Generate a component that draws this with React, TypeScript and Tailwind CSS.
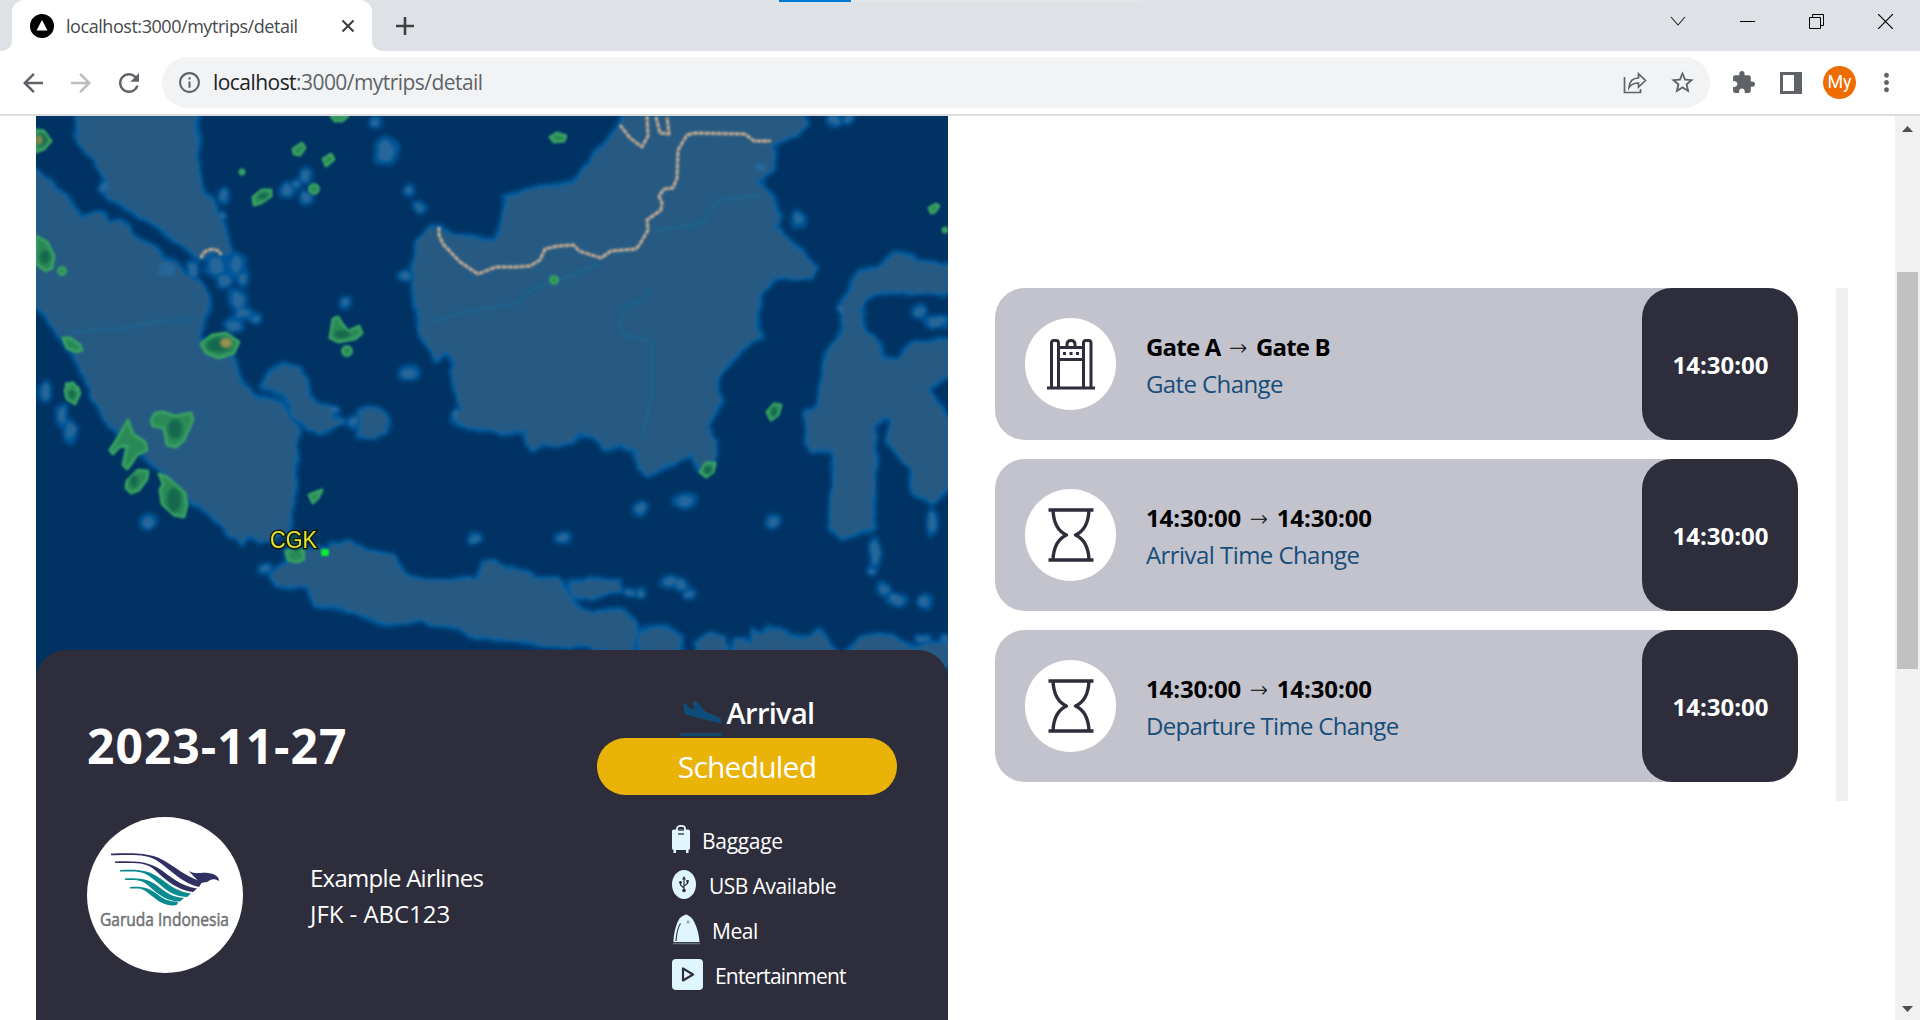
import React from "react";
import { MdArrowBack, MdArrowForward, MdRefresh, MdInfoOutline, MdStarBorder, MdExtension, MdMoreVert } from "react-icons/md";

const LAND = [
  // Malay peninsula
  "M78 100L78 137L87 153L102 173L108 183L108 195L130 210L163 230L180 242L200 257L211 252L222 255L230 253L228 240L220 220L213 203L202 192L197 160L197 100Z",
  // Sumatra
  "M20 160L36 172L50 182L58 193L70 200L80 218L90 217L102 213L110 225L120 221L129 226L132 238L143 242L158 250L162 260L177 263L183 277L200 282L208 297L205 317L198 337L210 355L233 357L237 373L243 385L257 397L280 403L292 422L300 433L295 447L295 480L292 513L288 532L277 537L260 541L250 533L242 543L230 535L210 512L190 500L178 490L147 457L113 427L93 400L88 382L77 360L63 340L47 317L36 303L20 290Z",
  // Bangka and Belitung
  "M262 387L273 368L283 365L297 367L305 380L308 397L320 407L333 408L332 418L343 422L320 433L303 423L293 417L285 395L267 390Z",
  "M358 412L368 408L382 410L389 420L386 432L372 436L358 437L361 428Z",
  // Java and Madura
  "M287 562L270 577L277 583L290 587L308 587L315 603L350 610L377 620L393 623L423 620L450 627L483 637L532 642L571 647L578 643L600 650L634 655L636 623L621 610L593 613L575 607L568 590L557 580L536 578L525 572L504 568L496 562L484 563L477 580L436 580L407 577L403 573L393 557L370 553L350 543L333 543L327 550L313 548L287 551Z",
  "M571 583L618 580L620 590L593 597L573 597Z",
  // Borneo
  "M437 227L455 237L473 237L493 243L498 238L504 217L505 197L514 197L532 190L573 183L582 173L596 153L611 137L620 123L632 100L796 100L807 123L796 135L771 143L771 170L757 180L771 197L780 217L775 228L793 243L816 267L811 277L775 277L761 293L757 317L761 337L743 347L732 360L716 377L721 400L714 413L707 430L716 443L712 467L700 470L693 455L671 463L646 475L639 470L636 450L621 445L604 448L595 438L580 432L571 440L557 445L543 443L532 450L527 443L525 430L500 432L468 427L455 417L462 410L454 380L455 363L446 353L434 360L432 350L421 337L418 310L414 293L412 273L418 243L429 230Z",
  // Sulawesi
  "M960 265L948 265L918 262L911 255L893 253L880 267L861 272L850 287L841 310L843 333L827 353L825 377L818 407L807 413L807 443L814 450L832 450L836 477L830 503L829 527L843 537L861 532L873 527L873 480L875 437L870 428L882 417L893 417L889 443L911 467L914 493L932 503L948 490L960 490L960 430L948 422L936 403L929 388L948 373L960 373L960 340L914 343L896 360L884 358L877 343L864 330L861 310L866 297L879 292L907 293L960 292Z",
  // Lesser Sunda islands
  "M638 634L650 630L668 629L682 638L680 655L640 655Z",
  "M697 655L699 642L710 634L724 639L728 655Z",
  "M730 655L738 641L752 644L754 630L763 636L768 628L780 629L789 637L811 637L818 630L824 640L839 655Z",
  "M845 655L860 639L880 635L902 642L918 650L930 643L960 645L960 668L935 664Z",
];

const ISLETS: [number, number, number, number][] = [
  [376, 121, 6, 6], [386, 151, 13, 14], [410, 191, 6, 7], [419, 207, 8, 6], [306, 176, 8, 9], [287, 190, 7, 8],
  [296, 184, 5, 5], [306, 197, 7, 6], [224, 196, 6, 7], [222, 215, 5, 6], [404, 276, 6, 6], [345, 303, 7, 7],
  [410, 373, 11, 8], [105, 187, 5, 8], [166, 270, 13, 11], [193, 271, 6, 11], [216, 266, 11, 12], [237, 264, 10, 12],
  [225, 281, 8, 9], [243, 278, 6, 8], [238, 301, 9, 12], [243, 314, 10, 7], [255, 318, 6, 5], [234, 325, 9, 8],
  [148, 522, 10, 8], [44, 394, 7, 10], [61, 415, 6, 12], [70, 431, 7, 12], [265, 569, 7, 6], [475, 539, 7, 7],
  [563, 538, 8, 7], [640, 509, 7, 8], [685, 501, 11, 8], [773, 521, 7, 7], [798, 219, 8, 10], [834, 119, 9, 7],
  [849, 118, 6, 5], [919, 312, 6, 7], [938, 322, 15, 7], [875, 552, 6, 17], [872, 572, 5, 5], [884, 589, 7, 7],
  [896, 600, 10, 6], [925, 600, 7, 8], [932, 522, 6, 14], [669, 582, 8, 6], [680, 585, 9, 6], [689, 594, 7, 6],
  [630, 592, 6, 5], [640, 592, 5, 5], [923, 638, 7, 5], [945, 640, 5, 5], [45, 387, 5, 6], [761, 167, 8, 7],
  [353, 422, 6, 6], [335, 411, 6, 5], [456, 415, 5, 6], [841, 310, 4, 5],
];

const RAIN = [
  "M36 130L44 131L51 141L44 149L36 152Z",
  "M36 236L47 242L54 256L52 268L46 271L36 264Z",
  "M63 338L70 338L80 345L82 350L76 352L67 348Z",
  "M201 344L212 335L226 333L239 342L234 353L219 358L206 353Z",
  "M333 319L338 317L343 325L348 331L359 326L362 333L355 339L338 342L330 338Z",
  "M253 197L262 190L271 190L271 196L261 203L254 205Z",
  "M293 149L302 143L305 148L300 155L294 154Z",
  "M323 159L331 154L334 159L326 166Z",
  "M331 116L348 116L342 121L335 121Z",
  "M67 385L73 383L80 393L75 404L67 399L65 391Z",
  "M66 384L72 383L79 389L72 391Z",
  "M128 420L133 434L145 442L147 450L137 455L131 464L127 469L123 465L127 446L119 447L113 454L110 450L119 436Z",
  "M151 421L155 413L163 412L175 416L191 413L193 420L184 440L176 447L167 445L164 428L153 426Z",
  "M127 481L138 470L148 471L147 479L139 490L131 493L126 488Z",
  "M159 474L167 477L185 493L187 505L184 517L174 515L162 504L160 490L163 484Z",
  "M309 495L322 490L318 498L313 503Z",
  "M286 551L303 550L304 559L297 562L288 560Z",
  "M767 412L774 404L781 405L778 415L771 420Z",
  "M700 472L706 463L715 463L713 472L706 477Z",
  "M929 208L936 204L939 206L935 212L931 213Z",
  "M550 137L557 133L566 136L564 141L554 142Z",
];
const RAIN_DOTS: [number, number, number][] = [[62, 271, 4.5], [242, 172, 3], [314, 189, 5.5], [347, 351, 5.5], [554, 280, 4.5], [945, 230, 3]];
const RAIN_CORES: [number, number, number, number][] = [
  [219, 345, 12, 7], [41, 140, 6, 6], [45, 257, 5, 7], [342, 334, 8, 4], [72, 394, 3, 5], [175, 429, 7, 10],
  [134, 481, 4, 6], [174, 500, 7, 12], [296, 543, 6, 9], [774, 412, 3, 5], [708, 470, 4, 4], [263, 196, 5, 3],
];

const BORDERS = [
  "M439 227L439 235L443 244L460 262L478 274L496 267L515 267L530 266L540 260L545 249L558 246L574 245L579 251L601 258L611 251L636 249L640 244L648 230L647 220L661 210L662 203L659 196L664 189L673 188L677 178L678 150L687 135L695 133L745 134L754 141L771 141",
  "M620 125L630 138L642 147L648 136L647 116",
  "M656 117L660 133L669 134L667 117",
  "M201 258C204 247 219 247 221 255",
];
const RIVERS = [
  "M70 332L120 329L165 320L198 320",
  "M430 322L460 313L515 304L535 288L575 274L598 264",
  "M655 230L690 226L703 222L718 200L760 195",
  "M650 290L638 302L625 305L620 325L626 336L651 340L651 400L642 437",
];

function RadarMap() {
  return (
    <svg className="block h-full w-full" viewBox="36 116 912 584" preserveAspectRatio="none">
      <defs>
        <filter id="halo" x="-5%" y="-5%" width="110%" height="110%">
          <feTurbulence type="fractalNoise" baseFrequency="0.06" numOctaves="2" seed="4" result="n" />
          <feDisplacementMap in="SourceGraphic" in2="n" scale="8" xChannelSelector="R" yChannelSelector="G" />
          <feGaussianBlur stdDeviation="2.2" />
        </filter>
        <filter id="coast" x="-5%" y="-5%" width="110%" height="110%">
          <feTurbulence type="fractalNoise" baseFrequency="0.06" numOctaves="2" seed="4" result="n" />
          <feDisplacementMap in="SourceGraphic" in2="n" scale="8" xChannelSelector="R" yChannelSelector="G" />
          <feGaussianBlur stdDeviation="1.7" />
        </filter>
        <filter id="soft"><feGaussianBlur stdDeviation="0.8" /></filter>
        <filter id="core"><feGaussianBlur stdDeviation="1.6" /></filter>
      </defs>
      <rect x="36" y="116" width="912" height="584" fill="#003263" />
      <g filter="url(#halo)">
        {LAND.map((d) => <path key={d} d={d} fill="#02599a" stroke="#02599a" strokeWidth="7" strokeLinejoin="round" />)}
        {ISLETS.map(([x, y, a, b], i) => <ellipse key={i} cx={x} cy={y} rx={a + 1} ry={b + 1} fill="#03579a" />)}
      </g>
      <g filter="url(#coast)">
        {LAND.map((d) => <path key={d} d={d} fill="#275a82" stroke="#17609a" strokeWidth="1.500" />)}
        {ISLETS.map(([x, y, a, b], i) => <ellipse key={i} cx={x} cy={y} rx={a * 0.66} ry={b * 0.66} fill="#266699" />)}
      </g>
      <g fill="none" filter="url(#soft)" stroke="#1c6390" strokeWidth="2.500">
        {RIVERS.map((d) => <path key={d} d={d} />)}
      </g>
      <g fill="none" strokeLinejoin="round" filter="url(#soft)">
        {BORDERS.map((d) => (
          <g key={d}>
            <path d={d} stroke="#8a8582" strokeWidth="3.400" />
            <path d={d} stroke="#cdbfa8" strokeWidth="2" strokeDasharray="3.500 2.500" />
          </g>
        ))}
      </g>
      <g filter="url(#soft)" fill="#2b8a57" stroke="#38a064" strokeWidth="3" strokeLinejoin="round">
        {RAIN.map((d) => <path key={d} d={d} />)}
        {RAIN_DOTS.map(([x, y, r]) => <circle key={x} cx={x} cy={y} r={r - 1} />)}
      </g>
      <g filter="url(#core)" fill="#10604e">
        {RAIN_CORES.map(([x, y, a, b]) => <ellipse key={x} cx={x} cy={y} rx={a} ry={b} opacity="0.8" />)}
      </g>
      <g filter="url(#core)" fill="#97924f">
        <ellipse cx="226" cy="343" rx="6" ry="5" />
        <ellipse cx="39" cy="140" rx="4" ry="5" opacity="0.8" />
      </g>
      <rect x="321" y="549" width="8" height="7" rx="2" fill="#08f032" filter="url(#soft)" />
      <text x="270" y="548" textLength="47" lengthAdjust="spacingAndGlyphs" fontFamily="Liberation Sans" fontSize="23" fill="#e6e32a" stroke="#111a10" strokeWidth="3" paintOrder="stroke">CGK</text>
    </svg>
  );
}

function BrowserChrome() {
  return (
    <header className="flex h-[116px] flex-col border-b-2 border-[#dcdddf] bg-white">
      <div className="relative flex h-[51px] bg-[#dee1e6]">
        <div className="absolute left-[779px] top-0 flex h-[2px] w-[362px] bg-[#e5e5e7]"><div className="w-[72px] bg-[#0078d7]" /></div>
        <div className="flex w-3 items-end bg-white"><div className="h-full w-full rounded-br-[10px] bg-[#dee1e6]" /></div>
        <div className="flex w-[360px] items-center rounded-t-xl bg-white pl-[18px] pr-[17px]">
          <svg width="24" height="24" viewBox="0 0 24 24"><circle cx="12" cy="12" r="12" fill="#000" /><path d="M12 6L17.500 16.500H6.500Z" fill="#fff" /></svg>
          <span className="ml-3 flex-1 whitespace-nowrap text-[18px] leading-6 tracking-[-0.450px] text-[#45494d]">localhost:3000/mytrips/detail</span>
          <svg width="14" height="14" viewBox="0 0 14 14" stroke="#3c4043" strokeWidth="2.100"><path d="M1.500 1.500L12.500 12.500M12.500 1.500L1.500 12.500" /></svg>
        </div>
        <div className="w-3 bg-white"><div className="h-full w-full rounded-bl-[10px] bg-[#dee1e6]" /></div>
        <div className="flex flex-1 items-center pl-3">
          <svg width="18" height="18" viewBox="0 0 18 18" stroke="#3c4043" strokeWidth="2.600"><path d="M9 0V18M0 9H18" /></svg>
        </div>
        <div className="flex h-[43px] items-center gap-[54px] pr-[27px]">
          <svg width="16" height="15" viewBox="0 0 16 15" fill="none" stroke="#222" strokeWidth="1.100"><path d="M1 3L8 11L15 3" /></svg>
          <svg width="15" height="15" viewBox="0 0 15 15" fill="#000"><path d="M0 7H15V8H0Z" /></svg>
          <svg width="15" height="15" viewBox="0 0 15 15" fill="none" stroke="#000"><path d="M.5 3.500H11.500V14.500H.5ZM3.500 3.500V.5H14.500V11.500H11.500" /></svg>
          <svg width="15" height="15" viewBox="0 0 15 15" fill="none" stroke="#000" strokeWidth="1.200"><path d="M0 0L15 15M15 0L0 15" /></svg>
        </div>
      </div>
      <div className="flex flex-1 items-center pl-[18px] text-[#5f6368]">
        <MdArrowBack size={30} className="mr-[18px]" />
        <MdArrowForward size={30} className="mr-[18px] text-[#babcbe]" />
        <MdRefresh size={30} className="mr-[18px]" />
        <div className="flex h-[51px] w-[1548px] items-center rounded-full bg-[#f1f3f4] pl-[15px] pr-[14px]">
          <MdInfoOutline size={25} />
          <span className="ml-[11px] flex-1 whitespace-nowrap pb-px text-[21px] leading-7 tracking-[-0.550px]"><span className="text-[#202124]">localhost</span>:3000/mytrips/detail</span>
          <svg className="mr-[22px]" width="24" height="22" viewBox="0 0 24 22" fill="none" stroke="#5f6368" strokeWidth="1.700"><path d="M1.500 5V20.500H17.500V17M6 15.500C6.500 9 10 6 15.500 6V1.800L22.500 8.500L15.500 15V11C11 11 8 12.500 6 15.500Z" /></svg>
          <MdStarBorder size={27} />
        </div>
        <MdExtension size={25} className="ml-[21px]" />
        <svg className="ml-[24px]" width="22" height="22" viewBox="0 0 22 22"><path d="M0 0H22V22H0Z" fill="#5f6368" /><path d="M3 3H14V19H3Z" fill="#fff" /></svg>
        <div className="ml-[21px] flex h-[33px] w-[33px] items-center justify-center rounded-full bg-[#ef6c00] pb-0.5 font-[Roboto] text-[18px] text-white">My</div>
        <MdMoreVert size={29} className="ml-[16px]" />
      </div>
    </header>
  );
}

function AirlineLogo() {
  return (
    <svg className="overflow-visible" width="156" height="156" viewBox="0 0 156 156">
      <circle cx="78" cy="78" r="78" fill="#fff" />
      <g fill="#2f2f61">
        <path d="M24 36.500C58 35.500 68 37.500 81 46S101 60 115 65L112 70C95 66 85 54 72 45S45 38.500 24 38.200Z" />
        <path d="M28 44.500C55 43.500 65 46 77 55S96 69 110 71.500L106 75C90 73 80 64 69 54S48 46.500 28 46Z" />
        <path d="M102 54C109 58 113 55 121 56C129 57 132 60 132 64C127 61 124 62 120 65L113 66C110 62 106 59 102 54Z" />
      </g>
      <g fill="#078b8f">
        <path d="M33 53C55 52 63 54 74 62S92 75 104 76.500L100 80C86 80 77 71 66 62S50 55 33 54.500Z" />
        <path d="M38 61.500C56 60.500 63 63 72 70S86 80 97 81L93 84.500C80 84.500 72 78 63 70S52 63.500 38 63Z" />
        <path d="M43 70C56 69 62 71 70 77S81 84 91 85Q91 89 85 88.500C74 87.500 69 82 61 76S52 72 43 71.500Z" />
      </g>
      <text x="13" y="109" textLength="129" lengthAdjust="spacingAndGlyphs" fontFamily="Open Sans" fontSize="17.500" fill="#707173" stroke="#707173" strokeWidth="0.500">Garuda Indonesia</text>
    </svg>
  );
}

const BaggageIcon = () => (
  <svg width="18" height="29" viewBox="0 0 18 29"><path d="M5 5V3.500C5 0 13 0 13 3.500V5" fill="none" stroke="#dff6fd" strokeWidth="1.800" /><path d="M0 6Q0 4.500 2 4.500H16Q18 4.500 18 6V23Q18 25 16.500 25V28H14V25H4V28H1.500V25Q0 25 0 23Z" fill="#dff6fd" /><path d="M6 5H12M6 9H12" stroke="#454c5a" strokeWidth="1.300" /></svg>
);
const UsbIcon = () => (
  <svg width="24" height="29" viewBox="0 0 24 29"><ellipse cx="12" cy="14.500" rx="12" ry="14.500" fill="#dff6fd" /><path d="M12 8V20M12 18L8.500 15V12.500M12 16L15.500 13.500V11" fill="none" stroke="#2d2d3b" strokeWidth="1.200" /><path d="M12 6L14 9.500H10ZM14.300 10H16.700V12.500H14.300Z" fill="#2d2d3b" /><circle cx="8.500" cy="12.500" r="1.400" fill="#2d2d3b" /><circle cx="12" cy="20.500" r="1.800" fill="#2d2d3b" /></svg>
);
const MealIcon = () => (
  <svg width="28" height="31" viewBox="0 0 28 31"><path d="M1.500 28C2 16 6 3 11 2Q14 -1 17 2C22 4 27 17 27.500 28Z" fill="#dff6fd" /><path d="M4 27C4.500 20 6 13 8.500 9.500" fill="none" stroke="#2d2d3b" strokeWidth="1.100" /><path d="M1 29.500H28" stroke="#6a7583" strokeWidth="1.500" /><circle cx="16" cy="8" r="1.700" fill="#9fb0ba" /></svg>
);
const PlayIcon = () => (
  <svg width="31" height="31" viewBox="0 0 31 31"><rect width="31" height="31" rx="4" fill="#dff6fd" /><path d="M11 9.500V21.500L21 15.500Z" fill="none" stroke="#2d2d3b" strokeWidth="2.200" strokeLinejoin="round" /></svg>
);

const AMENITIES = [
  { icon: <BaggageIcon />, label: "Baggage", style: "gap-3 tracking-[-0.300px]" },
  { icon: <UsbIcon />, label: "USB Available", style: "gap-[13px] tracking-[-0.500px]" },
  { icon: <MealIcon />, label: "Meal", style: "gap-3 tracking-[-0.450px]" },
  { icon: <PlayIcon />, label: "Entertainment", style: "gap-3 tracking-[-0.820px]" },
];

function FlightCard() {
  return (
    <section className="flex h-[370px] rounded-t-[30px] bg-[#2d2d3b] text-white">
      <div className="flex flex-1 flex-col pl-[51px] pt-[60px]">
        <h1 className="whitespace-nowrap text-[48px] font-bold leading-[72px] tracking-[1px]">2023-11-27</h1>
        <div className="mt-[35px] flex items-center gap-[67px]">
          <AirlineLogo />
          <div className="whitespace-nowrap pt-[2px] text-[24px] leading-9">
            <p className="tracking-[-0.720px]">Example Airlines</p>
            <p className="tracking-[-0.050px]">JFK - ABC123</p>
          </div>
        </div>
      </div>
      <div className="mr-[51px] flex w-[300px] flex-col pt-[43px]">
        <div className="flex h-[45px] items-center justify-center text-[29px] font-semibold leading-[45px] tracking-[-0.700px]">
          <svg className="mr-[4px] mt-1.5" width="43" height="37" viewBox="0 0 43 37" fill="#0e4d79"><path d="M3.300 4.300L6.300 3.700L8.300 7.700L14.700 9.300L12.300 1.500L15.700 1L25.700 11.700L37.300 16.700Q42.500 19 41.500 22.500L39 23L10.700 16L4.700 13.700Z" /><path d="M0 33H42V36H0Z" opacity="0.8" /></svg>
          <span className="-mt-[7px]">Arrival</span>
        </div>
        <div className="flex h-[57px] items-center justify-center rounded-full bg-[#eab308] text-[30px] tracking-[-0.800px]">Scheduled</div>
        <ul className="ml-[75px] mt-[22px]">
          {AMENITIES.map((a) => (
            <li key={a.label} className={"flex h-[45px] items-center whitespace-nowrap text-[21px] " + a.style}>{a.icon}<span className="pt-[4px]">{a.label}</span></li>
          ))}
        </ul>
      </div>
    </section>
  );
}

const GateIcon = () => (
  <svg width="50" height="54" viewBox="0 0 50 54" fill="none" stroke="#2d2d3b" strokeWidth="3"><path d="M1 51H49M5.500 51V6Q5.500 3.500 8 3.500H10Q12.500 3.500 12.500 6V51M37.500 51V6Q37.500 3.500 40 3.500H42.500Q45 3.500 45 6V51M12.500 10.500H37.500M12.500 22.500H37.500M21 10V7.500Q21 3.500 25 3.500T29 7.500V10" /><path d="M17 16.500H20M23.500 16.500H26.500M30 16.500H33" /></svg>
);
const HourglassIcon = () => (
  <svg width="46" height="54" viewBox="0 0 46 54" fill="none" stroke="#2d2d3b" strokeWidth="3.400"><path d="M.5 2H45.500M.5 52H45.500M5 2C5.500 14 9.500 23 18.500 27C9.500 31 5.500 40 5 52M41 2C40.500 14 36.500 23 27.500 27C36.500 31 40.500 40 41 52" strokeLinejoin="round" /></svg>
);

const UPDATES = [
  { icon: <GateIcon />, from: "Gate A", to: "Gate B", label: "Gate Change", time: "14:30:00", title: "tracking-[-0.800px]", sub: "tracking-[-0.600px]" },
  { icon: <HourglassIcon />, from: "14:30:00", to: "14:30:00", label: "Arrival Time Change", time: "14:30:00", title: "tracking-[-0.100px]", sub: "tracking-[-0.560px]" },
  { icon: <HourglassIcon />, from: "14:30:00", to: "14:30:00", label: "Departure Time Change", time: "14:30:00", title: "tracking-[-0.100px]", sub: "tracking-[-0.700px]" },
];

function Updates() {
  return (
    <section className="ml-[47px] mt-[172px] flex h-[513px] w-[853px] justify-between">
      <div className="flex w-[803px] flex-col gap-[19px]">
        {UPDATES.map((u) => (
          <article key={u.label} className="flex h-[152px] items-center rounded-[30px] bg-[#c3c3cd] pl-[30px]">
            <div className="flex h-[92px] w-[91px] items-center justify-center rounded-full bg-white">{u.icon}</div>
            <div className="ml-[30px] flex-1 whitespace-nowrap pt-[2px] text-[24px] leading-9">
              <p className={"flex items-center font-bold text-black " + u.title}>
                {u.from}
                <span className="mx-[8.500px] pt-[2px] font-['DejaVu_Sans'] text-[22px] font-extralight tracking-normal">→</span>
                {u.to}
              </p>
              <p className={"text-[#174d79] " + u.sub}>{u.label}</p>
            </div>
            <div className="flex h-full w-[156px] items-center justify-center rounded-[30px] bg-[#2d2d3b] pl-px pt-[2px] text-[24px] font-bold text-white">{u.time}</div>
          </article>
        ))}
      </div>
      <div className="w-3 bg-[#f0f0f0]" />
    </section>
  );
}

export default function App() {
  return (
    <div className="h-[1020px] w-[1920px] overflow-hidden bg-white font-['Open_Sans',sans-serif]">
      <BrowserChrome />
      <main className="flex h-[904px]">
        <div className="ml-9 flex w-[912px] flex-col">
          <div className="-mb-[50px] h-[584px] shrink-0"><RadarMap /></div>
          <div className="relative"><FlightCard /></div>
        </div>
        <Updates />
        <div className="ml-[47px] flex w-[25px] flex-col items-center bg-[#f1f1f1] pb-2 pt-[10px]">
          <svg width="11" height="6" viewBox="0 0 11 6" fill="#505050"><path d="M5.500 0L11 6H0Z" /></svg>
          <div className="mt-[140px] h-[397px] w-[21px] bg-[#c1c1c1]" />
          <svg className="mt-auto" width="11" height="6" viewBox="0 0 11 6" fill="#505050"><path d="M5.500 6L11 0H0Z" /></svg>
        </div>
      </main>
    </div>
  );
}
